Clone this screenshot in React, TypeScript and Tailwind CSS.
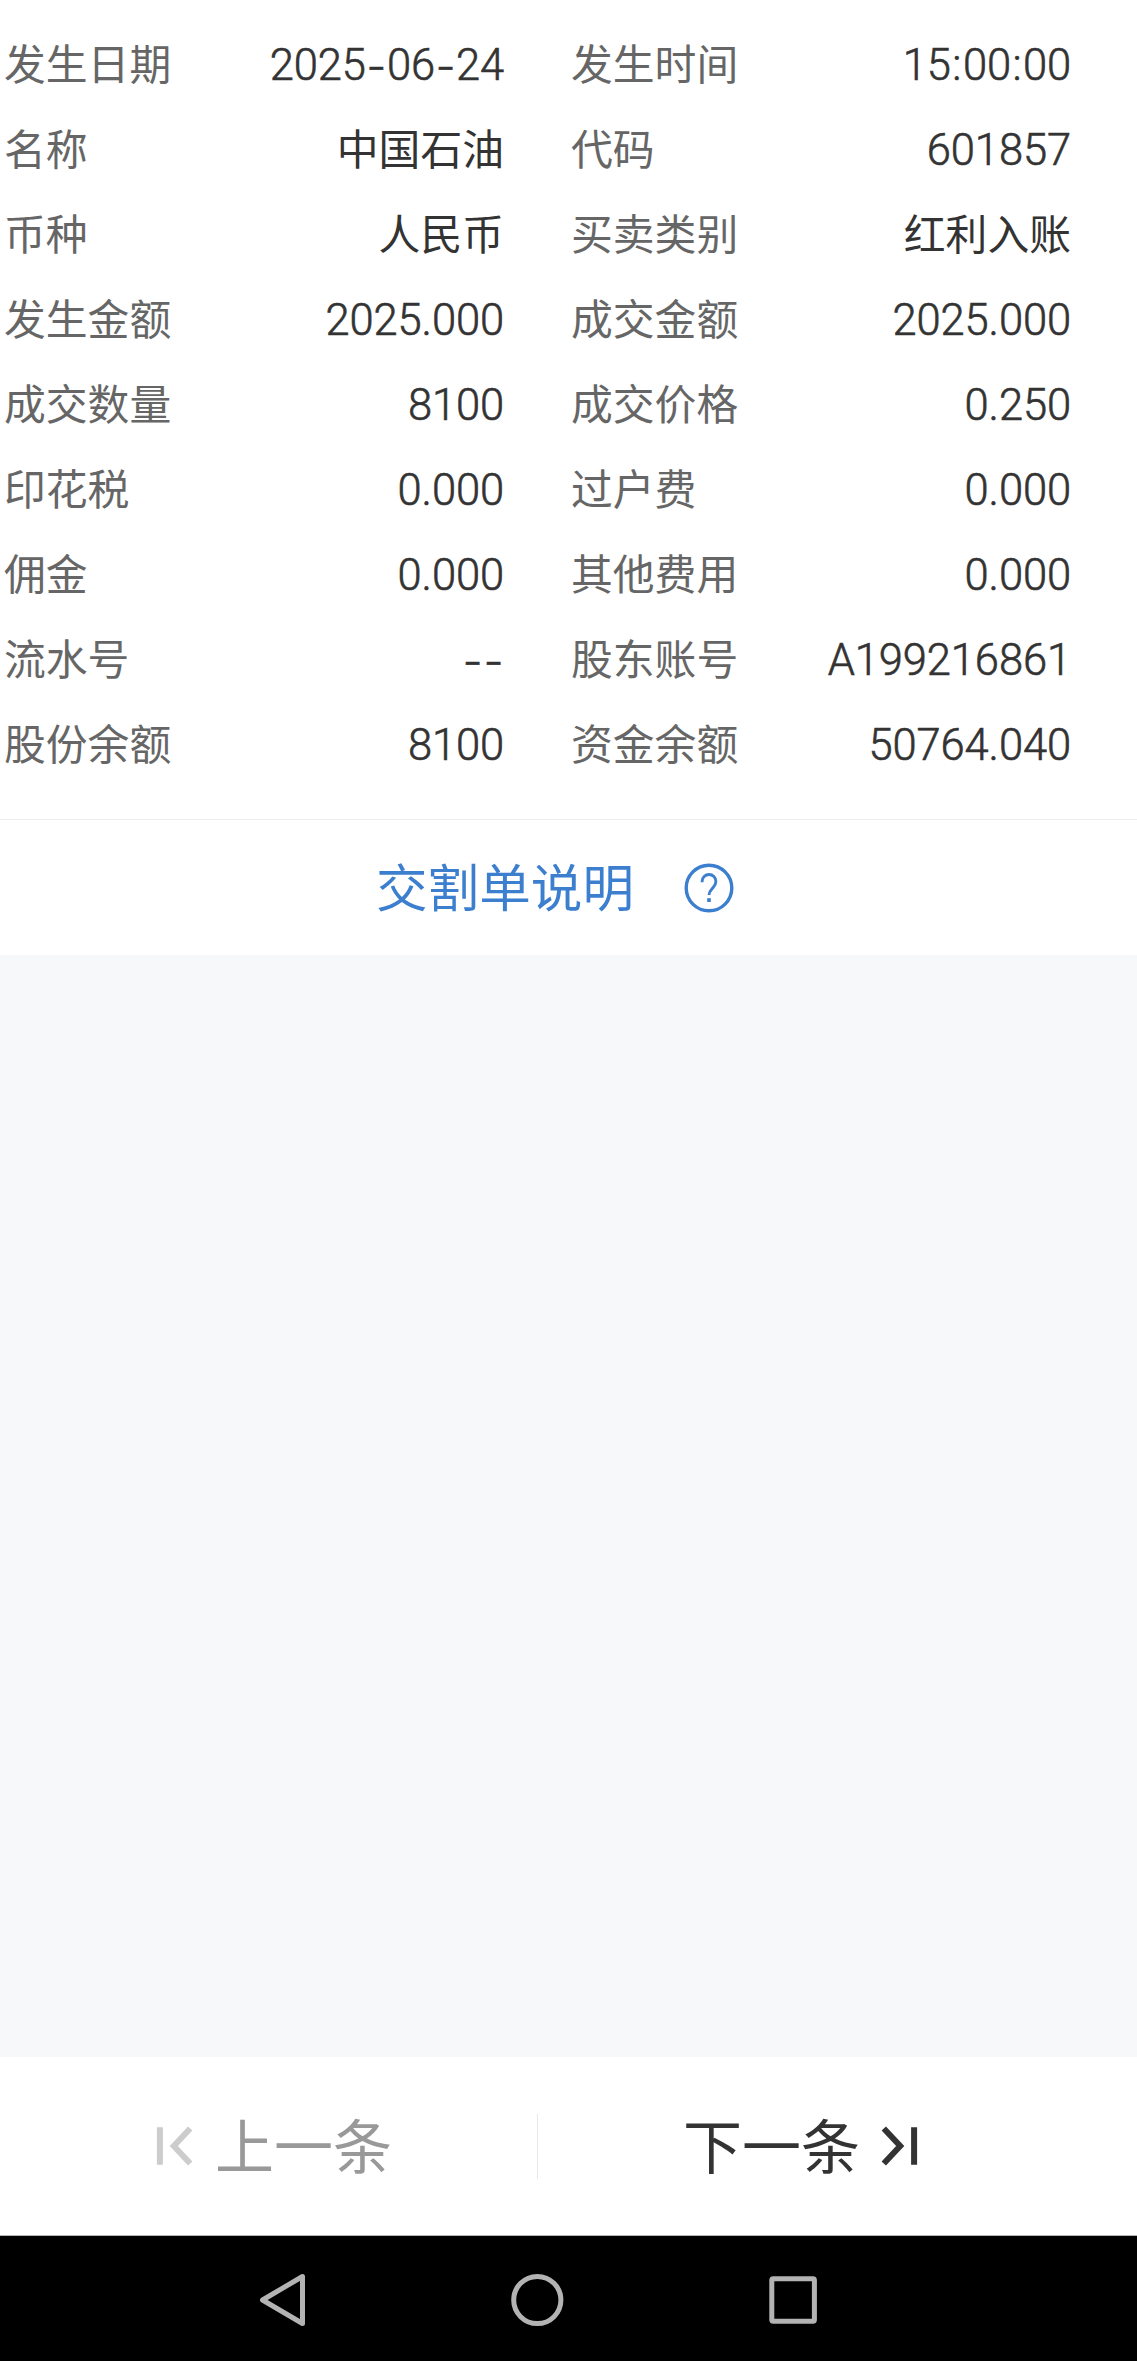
import clsx from "clsx";

const rows = [
  ["发生日期", "2025-06-24", "发生时间", "15:00:00"],
  ["名称", "中国石油", "代码", "601857"],
  ["币种", "人民币", "买卖类别", "红利入账"],
  ["发生金额", "2025.000", "成交金额", "2025.000"],
  ["成交数量", "8100", "成交价格", "0.250"],
  ["印花税", "0.000", "过户费", "0.000"],
  ["佣金", "0.000", "其他费用", "0.000"],
  ["流水号", "--", "股东账号", "A199216861"],
  ["股份余额", "8100", "资金余额", "50764.040"],
];

function Value({ text }: { text: string }) {
  // Chinese values share the label metrics, numbers use the narrower latin face
  if (/[^\x00-\x7f]/.test(text)) {
    return <span className="pb-[5px] text-[41.8px] leading-[60px] text-[#333333]">{text}</span>;
  }

  return (
    <span className="flex pt-[3px] font-[Roboto,sans-serif] text-[43.5px] leading-[60px] font-light tracking-[-0.1px] text-[#333333] [-webkit-text-stroke:0.6px_#333333]">
      {text.split(/([-:])/).map((part, i) => {
        if (part === "-") {
          return (
            <span key={i} className="w-[21px] text-center font-[Inter,sans-serif] font-light">
              -
            </span>
          );
        }
        if (part === ":") {
          return (
            <span key={i} className="w-[12px] text-center">
              :
            </span>
          );
        }
        return <span key={i}>{part}</span>;
      })}
    </span>
  );
}

function Field({ label, value, className }: { label: string; value: string; className?: string }) {
  return (
    <div className={clsx("flex items-center justify-between", className)}>
      <span className="pb-[5px] text-[41.8px] leading-[60px] text-[#666666]">{label}</span>
      <Value text={value} />
    </div>
  );
}

export default function App() {
  return (
    <div className="flex h-[2361px] w-[1137px] flex-col overflow-hidden bg-[#f7f8fa] font-['Noto_Sans_CJK_SC',sans-serif] whitespace-nowrap">
      <section className="bg-white pt-[22px]">
        {rows.map(([a, b, c, d]) => (
          <div key={a} className="flex h-[85px] pl-1">
            <Field label={a} value={b} className="w-[500px]" />
            <Field label={c} value={d} className="ml-[67px] w-[500px]" />
          </div>
        ))}

        <div className="mt-8 flex h-[136px] items-center border-t border-[#eeeeee] pl-[376px]">
          <span className="pb-1.5 text-[51.6px] leading-[72px] text-[#3d7fcf]">交割单说明</span>
          <svg className="ml-[49.5px] size-[52px]" viewBox="0 0 52 52" fill="none" stroke="#3d7fcf">
            <circle cx="26" cy="26" r="22.8" strokeWidth="3.4" />
            <path d="M19.1 20.3v-.9a6.9 6.9 0 0 1 13.8 0c0 3.4-1.6 4.9-3.6 7.2-2.1 2.3-3.3 3.5-3.3 6.4" strokeWidth="2.9" />
            <path d="M26 36.2v3.8" strokeWidth="3.6" />
          </svg>
        </div>
      </section>

      <footer className="mt-auto">
        <div className="flex h-[178px] items-center bg-white">
          <button className="flex w-[537px] items-center pl-[156px] text-[#999999]">
            <svg className="h-[42px] w-[38px]" viewBox="0 0 38 42" fill="none" stroke="#cccccc" strokeWidth="6">
              <path d="M3.9 2.2v37.6M34.2 3.5 17.8 21l16.4 17.5" />
            </svg>
            <span className="ml-[21px] pb-1 text-[59px] leading-[80px]">上一条</span>
          </button>
          <div className="h-[65px] w-px bg-[#e8e8e8]" />
          <button className="flex items-center pl-[145px] text-[#333333]">
            <span className="pb-1 text-[59px] leading-[80px]">下一条</span>
            <svg className="ml-5 h-[42px] w-[38px]" viewBox="0 0 38 42" fill="none" stroke="#333333" strokeWidth="6">
              <path d="M34.1 2.2v37.6M3.8 3.5 20.2 21 3.8 38.5" />
            </svg>
          </button>
        </div>

        <nav className="flex h-[126px] items-center border-t border-[#b5b5b5] bg-black pt-0.5 pl-[256px]">
          <svg className="size-[54px]" viewBox="0 0 54 54" fill="none" stroke="#b3b3b3" strokeWidth="5" strokeLinejoin="round">
            <path d="M6.5 27 46.5 3.5v47z" />
          </svg>
          <svg className="ml-[200px] size-[54px]" viewBox="0 0 54 54" fill="none" stroke="#b3b3b3" strokeWidth="5">
            <circle cx="27.3" cy="27" r="23.6" />
          </svg>
          <svg className="ml-[202px] size-[54px]" viewBox="0 0 54 54" fill="none" stroke="#b3b3b3" strokeWidth="5">
            <rect x="5.8" y="5.7" width="42.6" height="42.6" rx="1.5" />
          </svg>
        </nav>
      </footer>
    </div>
  );
}
